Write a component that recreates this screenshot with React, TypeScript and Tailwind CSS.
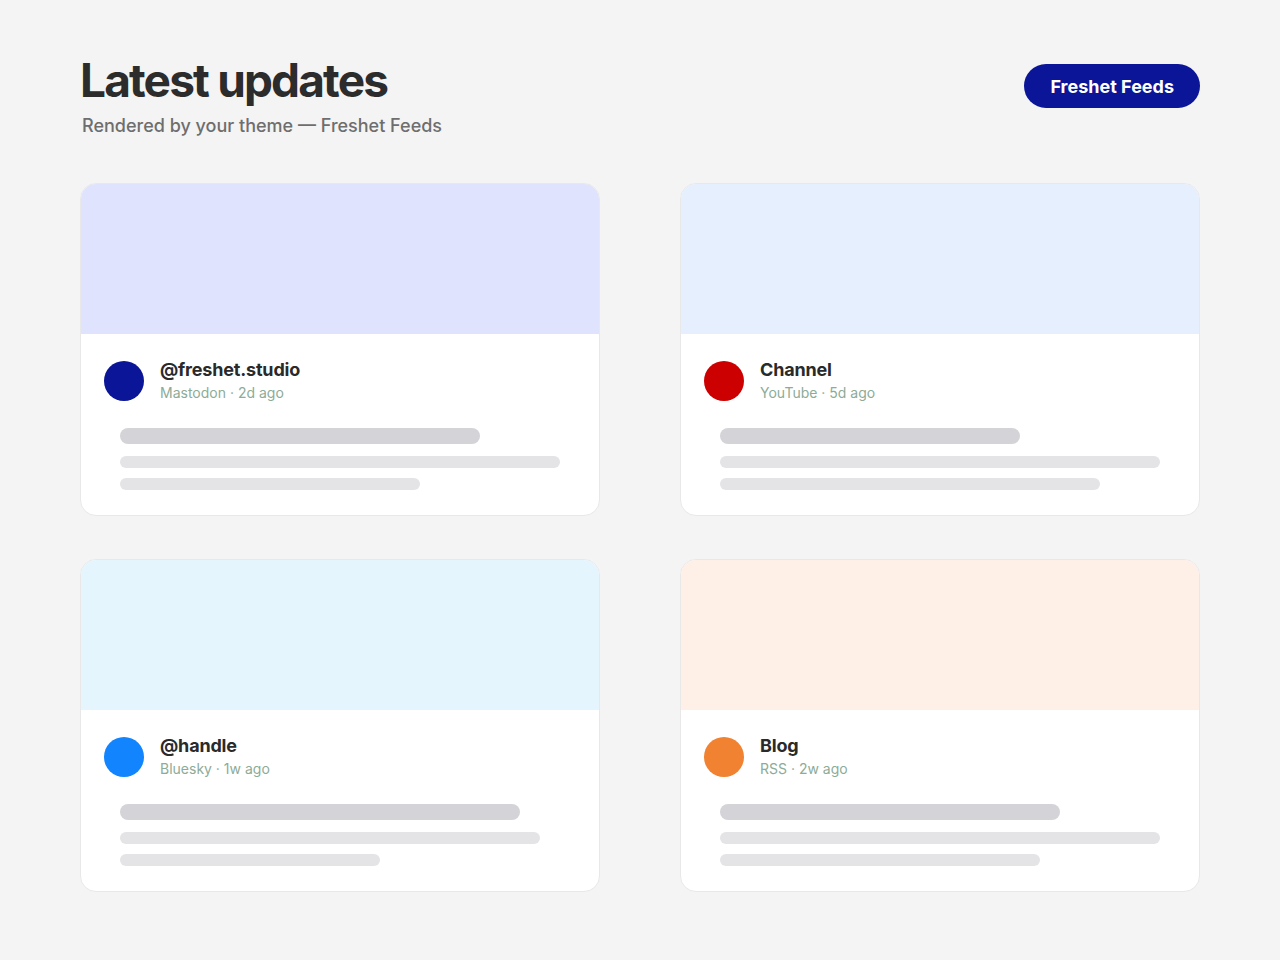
import React from "react";

type Post = {
  name: string;
  meta: string;
  cover: string;
  avatar: string;
  lines: [number, number, number];
};

const posts: Post[] = [
  { name: "@freshet.studio", meta: "Mastodon · 2d ago", cover: "bg-[#e0e3fd]", avatar: "bg-[#0b1597]", lines: [360, 440, 300] },
  { name: "Channel", meta: "YouTube · 5d ago", cover: "bg-[#e6effd]", avatar: "bg-[#cc0000]", lines: [300, 440, 380] },
  { name: "@handle", meta: "Bluesky · 1w ago", cover: "bg-[#e5f5fe]", avatar: "bg-[#1285fe]", lines: [400, 420, 260] },
  { name: "Blog", meta: "RSS · 2w ago", cover: "bg-[#fef0e6]", avatar: "bg-[#f08232]", lines: [340, 440, 320] },
];

function FeedCard({ post }: { post: Post }) {
  return (
    <div className="overflow-hidden rounded-2xl border border-[#e8e8e8] bg-white">
      <div className={`h-[150px] ${post.cover}`} />
      <div className="px-[23px] pt-6 pb-[25px]">
        <div className="flex items-center gap-4">
          <div className={`h-10 w-10 shrink-0 rounded-full ${post.avatar}`} />
          <div className="flex flex-col">
            <span className="text-[18px] leading-6 font-bold tracking-[-0.01em] text-[#2a2a2a]">{post.name}</span>
            <span className="mt-[1px] text-[14px] leading-5 text-[#8dab97]">{post.meta}</span>
          </div>
        </div>
        <div className="mt-[25px] flex flex-col px-4">
          <div className="h-4 rounded-full bg-[#d4d4d8]" style={{ width: post.lines[0] }} />
          <div className="mt-3 h-3 rounded-full bg-[#e4e4e7]" style={{ width: post.lines[1] }} />
          <div className="mt-[10px] h-3 rounded-full bg-[#e4e4e7]" style={{ width: post.lines[2] }} />
        </div>
      </div>
    </div>
  );
}

export default function App() {
  return (
    <div className="min-h-[960px] bg-[#f4f4f4] px-20 pt-[54px] font-['Inter',sans-serif]">
      <header className="flex items-start justify-between">
        <div>
          <h1 className="text-[46px] leading-[52px] font-bold tracking-[-0.04em] text-[#2c2c2c]">Latest updates</h1>
          <p className="mt-[8px] pl-[2px] text-[18px] leading-6 font-medium text-[#6e6e6e]">Rendered by your theme — Freshet Feeds</p>
        </div>
        <button className="mt-[10px] flex h-11 items-center rounded-full bg-[#0b1597] px-[26px] text-[18px] font-bold text-white">
          Freshet Feeds
        </button>
      </header>
      <main className="mt-[45px] grid grid-cols-2 gap-x-20 gap-y-[43px]">
        {posts.map((p) => (
          <FeedCard key={p.name} post={p} />
        ))}
      </main>
    </div>
  );
}
